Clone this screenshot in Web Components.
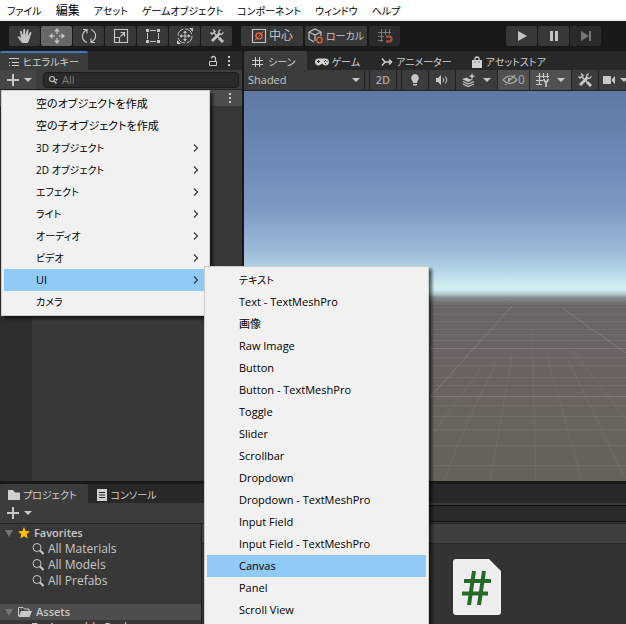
<!DOCTYPE html>
<html lang="ja">
<head>
<meta charset="utf-8">
<meta name="viewport" content="width=device-width">
<title>Unity Editor</title>
<style>
html, body { height: 100%; margin: 0; }
body { overflow: hidden; background: #191919; color: #c8c8c8; font: 12px/16px "Open Sans", "Noto Sans CJK JP", sans-serif; font-feature-settings: "palt"; }
</style>
</head>
<body>
<unity-editor></unity-editor>
<script>
const ICONS = {
  hand: [16, 16, '<path d="M5 15 1 9.500c-.6-1 .6-1.800 1.400-1L4.200 10 3 3.800c-.2-1.300 1.400-1.500 1.700-.3L6 7.500 6.300 1.800c0-1.300 1.800-1.300 1.800 0L8.500 7.300 9.700 2.200c.3-1.200 2-.9 1.800.4L10.900 8 12.700 4.600c.6-1 2-.4 1.600.8L12.500 11c-.5 2-1.200 3-2 4z" fill="currentColor"/>'],
  move: [18, 18, '<path d="M9 2v5M9 11v5M2 9h5M11 9h5" stroke="currentColor" stroke-width="1.200"/><path d="M6 4.500 9 1l3 3.500zM6 13.500 9 17l3-3.500zM4.500 6 1 9l3.500 3zM13.500 6 17 9l-3.500 3z" fill="currentColor"/>'],
  rotate: [16, 16, '<path d="M6 14.500C0 12 0 5 5.500 2M2 1.500h4v4M10 1.500C16 4 16 11 10.500 14M14 14.500h-4v-4" fill="none" stroke="currentColor" stroke-width="1.200"/>'],
  scale: [16, 16, '<path d="M1.500 1.500h13v13h-13zM1.500 9.500h5v5M7.500 8.500l4-4M7.500 4.500h4v4" fill="none" stroke="currentColor" stroke-width="1.200"/>'],
  rect: [16, 16, '<path d="M5 2.500h6M5 13.500h6M2.500 5v6M13.500 5v6" stroke="currentColor"/><path d="M1 1h3v3H1zM12 1h3v3h-3zM1 12h3v3H1zM12 12h3v3h-3z" fill="currentColor"/>'],
  transform: [18, 18, '<circle cx="9" cy="9" r="7" fill="none" stroke="currentColor" stroke-dasharray="9 2"/><path d="M9 4v10M4 9h10" stroke="currentColor"/><path d="M7 6l2-2.500L11 6zM7 12l2 2.500 2-2.500zM6 7 3.500 9 6 11zM12 7l2.500 2-2.500 2zM13 1h4v4zM5 17H1v-4z" fill="currentColor"/>'],
  tools: [16, 16, '<path d="M1.500 4.500 3 6l3-2.500L4 1.500" fill="none" stroke="currentColor" stroke-width="1.500"/><path d="m5 5 5 5" stroke="currentColor" stroke-width="1.500"/><path d="m10 10 4 4" stroke="currentColor" stroke-width="3"/><path d="M14.500 3.500 12 6 10 4l2.500-2.500C10 1 8.500 3 9 5l-7 7 2 2 7-7c2 .5 4-1 3.500-3.500z" fill="currentColor"/>'],
  center: [16, 16, '<path d="M1.500 1.500h13v13h-13z" fill="none" stroke="currentColor" stroke-width="1.200"/><path d="m3.500 12.500 9-9" stroke="#e2603c"/><circle cx="8" cy="8" r="3" fill="none" stroke="#e2603c" stroke-width="1.500"/>'],
  local: [16, 16, '<path d="m1 4 6-3 6 3v4M1 4v7l5 3M1 4l6 3 6-3M7 7v6" fill="none" stroke="currentColor" stroke-width="1.200"/><circle cx="11.500" cy="12" r="2.700" fill="none" stroke="#e2603c" stroke-width="1.400"/>'],
  snap: [16, 16, '<path d="M4.500 1v13M8.500 1v6M12.500 1v5M1 4.500h13M1 8.500h6M1 12.500h5" stroke="currentColor"/><path d="M9 8.500h3a2.500 2.500 0 0 1 0 5H9" fill="none" stroke="#9c5240" stroke-width="2.400"/>'],
  play: [14, 14, '<path d="m3 2 9 5-9 5z" fill="currentColor"/>'],
  pause: [14, 14, '<path d="M3 2h3v10H3zM8 2h3v10H8z" fill="currentColor"/>'],
  step: [14, 14, '<path d="m2 2 8 5-8 5zM10 2h2v10h-2z" fill="currentColor"/>'],
  hierarchy: [12, 10, '<path d="M1 1.500h10M4 5.500h7M4 8.500h7M1 5.500h1M1 8.500h1" stroke="currentColor"/>'],
  lock: [12, 12, '<path d="M2.500 6.500h7v4h-7z" fill="none" stroke="currentColor"/><path d="M8.500 6V3.500a2 2 0 0 0-4 0" fill="none" stroke="currentColor" stroke-width="1.300"/>'],
  kebab: [4, 12, '<path d="M1 1h2v2H1zM1 5h2v2H1zM1 9h2v2H1z" fill="currentColor"/>'],
  plus: [12, 12, '<path d="M6 0v12M0 6h12" stroke="currentColor" stroke-width="2"/>'],
  down: [8, 6, '<path d="M0 1h8L4 5z" fill="currentColor"/>'],
  search: [10, 10, '<circle cx="4" cy="4" r="2.500" fill="none" stroke="currentColor" stroke-width="1.200"/><path d="m6 6 2.500 2.500" stroke="currentColor" stroke-width="1.500"/><path d="M7 4h3L8.500 6z" fill="currentColor"/>'],
  lens: [12, 12, '<circle cx="5" cy="4.500" r="4" fill="none" stroke="currentColor"/><path d="m8 7.500 3.500 3.500" stroke="currentColor" stroke-width="2"/>'],
  grid: [13, 10, '<path d="M3.500 0v10M7.500 0v10M0 3.500h11M0 7.500h11" stroke="currentColor"/>'],
  gamepad: [14, 10, '<path d="M3.500 1.500h7a3.300 3.300 0 0 1 0 7C8.500 8.500 8.500 7 7 7S5.500 8.500 3.500 8.500a3.300 3.300 0 0 1 0-7z" fill="currentColor"/><path d="M2 4.500h3M3.500 3v3" stroke="#282828"/><path d="M9 4.500h1M11.500 4.500h1M10.500 3v1M10.500 6v1" stroke="#282828"/>'],
  animator: [12, 10, '<path d="M1 1.500 4 5h6M1 8.500 4 5M8 2.500 10.500 5 8 7.500" fill="none" stroke="currentColor" stroke-width="1.500"/>'],
  bag: [12, 12, '<path d="M1 4h10v8H1z" fill="currentColor"/><path d="M4 5V2.500Q4 1 6 1t2 1.500V5" fill="none" stroke="currentColor" stroke-width="1.300"/><path d="M3.500 6h1M7.500 6h1" stroke="#282828"/>'],
  bulb: [10, 14, '<path d="M5 1a4 4 0 0 1 2.500 7L7 10H3L2.500 8A4 4 0 0 1 5 1zM3 11h4v1.500H3z" fill="currentColor"/>'],
  audio: [14, 12, '<path d="M1 4h2l3-3v10L3 8H1z" fill="currentColor"/><path d="M8 4q1.500 2 0 4M10.500 2.500q2.500 3.500 0 7" fill="none" stroke="currentColor"/>'],
  effects: [14, 14, '<path d="M1 8.500l5 2.500 6-2.500M1 11l5 2.500 6-2.500" fill="none" stroke="currentColor" stroke-width="1.300"/><path d="m0 6 5-1.500 2 1.500 4 .5-5 2.500zM10 0l1 2.500L13.500 3 11 4l-1 2.500L9 4 6.500 3 9 2.500z" fill="currentColor"/>'],
  hidden: [16, 12, '<path d="M1 6q7-8 14 0-7 7-14 0zM3 11 13 1" fill="none" stroke="currentColor" stroke-width="1.200"/><path d="M6 4h3L6 8z" fill="currentColor"/>'],
  gridY: [14, 14, '<path d="M3.500 0v12M7.500 0v5M11.500 0v5M0 3.500h13M0 7.500h7M0 11.500h6" stroke="currentColor" stroke-width="1.200"/><path d="m7.500 6 2.500 4 2.500-4M10 10v4" fill="none" stroke="currentColor" stroke-width="1.700"/>'],
  camera: [14, 10, '<path d="M1 1h8v8H1zM10 4l3-3v8l-3-3z" fill="currentColor"/>'],
  folder: [12, 10, '<path d="M0 0h5l2 2.500h5V10H0z" fill="currentColor"/>'],
  openFolder: [14, 10, '<path d="M.5 9V.5H5l1.500 1.500H11V4" fill="none" stroke="currentColor"/><path d="M3 4h11l-2.500 6H.5z" fill="currentColor"/>'],
  console: [12, 12, '<path d="M1 0h10v12H1z" fill="currentColor"/><path d="M3 3.500h6M3 6h6M3 8.500h6" stroke="#282828"/>'],
  star: [12, 12, '<path d="m6 0 1.700 4 4.300.4-3.300 2.800 1 4.300L6 9.200l-3.700 2.300 1-4.300L0 4.400 4.300 4z" fill="#ffc107"/>'],
  fold: [10, 8, '<path d="M1 1h8L5 8z" fill="#747474"/>'],
  chevron: [6, 10, '<path d="m1 1.500 3.500 3.500L1 8.500" fill="none" stroke="#333" stroke-width="1.100"/>'],
  script: [48, 56, '<path d="M3 0h33l12 12v41a3 3 0 0 1-3 3H3a3 3 0 0 1-3-3V3a3 3 0 0 1 3-3z" fill="#eee"/><path d="m21 12-5 34M31 12l-5 34M11 22h27M9 34.500h26" stroke="#256b28" stroke-width="4"/>']
};
const define = (tag, css, html) => customElements.define(tag, class extends HTMLElement {
  connectedCallback() {
    if (this.shadowRoot) return;
    const t = document.createElement('template');
    t.innerHTML = `<style>*{box-sizing:border-box}button,input,select{font:inherit;font-feature-settings:inherit;color:inherit;border:0;margin:0;padding:0;background:none}${css}</style>` + (typeof html === 'function' ? html(this) : html);
    this.attachShadow({ mode: 'open' }).append(t.content.cloneNode(true));
  }
});
const icon = n => `<ui-icon name="${n}"></ui-icon>`;

define('ui-icon', ':host{display:inline-flex;flex:none}svg{display:block}', el => {
  const [w, h, d] = ICONS[el.getAttribute('name')];
  return `<svg width="${w}" height="${h}" viewBox="0 0 ${w} ${h}" aria-hidden="true">${d}</svg>`;
});

define('menu-bar', `:host{display:block;flex:none;background:#fff;color:#000;border-bottom:2px solid #f0f0f0}
nav{display:flex;height:19px;padding:2px 0 0 7px;gap:14px;font-size:10px}button{white-space:nowrap}.kanji{font-size:12px}`,
  `<nav aria-label="メイン">${['ファイル', '編集', 'アセット', 'ゲームオブジェクト', 'コンポーネント', 'ウィンドウ', 'ヘルプ'].map(t => `<button${t === '編集' ? ' class="kanji"' : ''}>${t}</button>`).join('')}</nav>`);

define('tool-button', `:host{display:block;flex:none}
button{display:flex;align-items:center;justify-content:center;gap:2px;width:31px;height:20px;background:#383838;color:#c4c4c4;white-space:nowrap;border-radius:2px}
:host([wide]) button{width:62px}:host([kana]) button{font-size:10px}:host([active]) button{background:#676767}:host([dim]) button{background:#2a2a2a;color:#777}`,
  el => `<button aria-label="${el.getAttribute('label')}">${icon(el.getAttribute('icon'))}<slot></slot></button>`);

define('main-toolbar', `:host{display:flex;flex:none;height:30px;align-items:center;padding:0 25px 0 9px;background:#191919;gap:9px}
div{display:flex;gap:1px}.pivot{gap:2px}.play{margin-left:auto}.snap{margin-left:-7px}`,
  `<div>${['hand', 'move', 'rotate', 'scale', 'rect', 'transform', 'tools'].map(n => `<tool-button icon="${n}" label="${n}"${n === 'move' ? ' active' : ''}></tool-button>`).join('')}</div>
<div class="pivot"><tool-button wide icon="center" label="中心">中心</tool-button><tool-button wide kana icon="local" label="ローカル">ローカル</tool-button></div>
<div class="snap"><tool-button dim icon="snap" label="snap"></tool-button></div>
<div class="play"><tool-button icon="play" label="play"></tool-button><tool-button icon="pause" label="pause"></tool-button><tool-button dim icon="step" label="step"></tool-button></div>`);

define('tab-strip', `:host{display:flex;height:19px;flex:none;background:#282828}`, '<slot></slot>');
define('tab-item', `:host{display:block;flex:none}
button{display:flex;align-items:center;gap:3px;height:19px;padding:2px 11px 0 8px;white-space:nowrap;color:#d0d0d0;font-size:10px}
:host([active]) button{background:#3c3c3c;border-radius:2px 2px 0 0}
:host([focused]) button{border-top:2px solid #3a79bb;padding:0 9px 0 8px}`,
  el => `<button role="tab" aria-selected="${el.hasAttribute('active')}">${icon(el.getAttribute('icon'))}<slot></slot></button>`);

define('hierarchy-panel', `:host{display:flex;flex-direction:column;background:#383838;min-width:0}
.end{display:flex;align-items:center;gap:8px;margin-left:auto;padding-right:11px}
.bar{display:flex;height:20px;align-items:center;background:#3c3c3c;gap:7px;padding-right:3px;border-bottom:1px solid #232323}
.add{display:flex;align-items:center;gap:5px;width:36px;height:19px;padding-left:7px;background:#464646}
label{display:flex;align-items:center;gap:4px;flex:1;height:16px;padding-left:4px;background:#2a2a2a;border:1px solid #191919;border-radius:4px}
input{width:100%;min-width:0;outline:0;font-size:11px}input::placeholder{color:#7b7b7b;opacity:1}
.row{display:flex;align-items:center;justify-content:flex-end;height:16px;padding-right:10px;background:#4d4d4d}
.tree{flex:1;background:linear-gradient(90deg,#2d2d2d 32px,#383838 32px)}`,
  `<tab-strip><tab-item active focused icon="hierarchy">ヒエラルキー</tab-item><span class="end">${icon('lock')}${icon('kebab')}</span></tab-strip>
<div class="bar"><button class="add" aria-label="作成">${icon('plus')}${icon('down')}</button><label>${icon('search')}<input aria-label="検索" placeholder="All"></label></div>
<div class="row">${icon('kebab')}</div><div class="tree"></div>`);

define('scene-panel', `:host{display:flex;flex-direction:column;min-width:0;overflow:hidden}
.gap{width:2px}
.bar{display:flex;flex:none;height:21px;gap:1px;background:#232323;border-bottom:1px solid #232323}
.bar button,.shade{display:flex;flex:none;align-items:center;justify-content:center;gap:4px;width:26px;background:#3c3c3c}
.shade{position:relative;width:120px;justify-content:flex-end;padding-right:4px;font-size:11px}
.shade select{position:absolute;inset:0;appearance:none;padding-left:4px;width:100%}
.bar .pair{width:41px;gap:7px}.bar .on{background:#505050}.bar .eye{width:31px;gap:0;color:#aaa}.bar .text{color:#aaa;font-weight:600;font-size:11px}
.bar .camera{justify-content:flex-start;gap:4px;padding-left:3px}
.pad{flex:none;width:4px;background:#3c3c3c}
.view{flex:1;min-height:0;background:linear-gradient(#5f78a4 0,#708bb7 20%,#7d9ac4 30%,#9cbbd9 41%,#b3d6e7 46%,#d0edf2 50%,#d0edf2 51%,#b5cacf 52%,#858b8d 53%,#6a6564 55%,#6b625f 76%,#69645c 84%,#66635b 100%)}
svg{display:block;width:100%;height:100%}`,
  `<tab-strip><tab-item active icon="grid">シーン</tab-item><tab-item icon="gamepad">ゲーム</tab-item><span class="gap"></span><tab-item icon="animator">アニメーター</tab-item><tab-item icon="bag">アセットストア</tab-item></tab-strip>
<div class="bar"><span class="shade"><select aria-label="描画モード"><option>Shaded</option></select>${icon('down')}</span><span class="pad"></span><button class="text">2D</button><span class="pad"></span><button aria-label="ライト">${icon('bulb')}</button><button aria-label="音声">${icon('audio')}</button><button class="pair" aria-label="効果">${icon('effects')}${icon('down')}</button><button class="on eye">${icon('hidden')}0</button><button class="on pair" aria-label="グリッド">${icon('gridY')}${icon('down')}</button><button aria-label="ツール">${icon('tools')}</button><button class="camera pair" aria-label="カメラ">${icon('camera')}${icon('down')}</button></div>
<div class="view"><svg viewBox="0 0 382 390" preserveAspectRatio="none" aria-hidden="true"><g fill="none" stroke="#aaa" stroke-opacity=".12">
<path d="M0 216.500h382M0 223.500h382M0 230.500h382M0 238.500h382M0 243.500h382M0 249.500h382M0 266.500h382M0 274.500h382M0 286.500h382M0 294.500h382M0 314.500h382M0 325.500h382M0 338.500h382M0 354.500h382M0 374.500h382"/>
<path d="M200 390Q220 335 253 270M246 390l22-125M292 390l-4-150M338 390l-35-125M381 387l-58-120M187 345l52-70M382 328l-55-70"/>
<path stroke-opacity=".3" d="M0 257.500h382M0 305.500h382M187 305l81-90M318 217l64 45"/></g></svg></div>`);

define('project-panel', `:host{display:flex;flex-direction:column;background:#383838;min-width:0;overflow:hidden}
.bar{display:flex;flex:none;height:20px;align-items:center;gap:5px;padding-left:7px;background:#3c3c3c}
.bar button{display:flex;align-items:center;gap:5px}
.bar input{flex:1;min-width:0;margin-left:200px;height:17px;background:#2a2a2a;border:1px solid #111;border-right:0;outline:0}
.body{display:flex;flex:1;min-height:0;border-top:1px solid #232323}
.list{flex:none;width:202px;border-right:1px solid #202020;padding-top:1px;overflow:hidden}
.row{display:flex;width:100%;height:16px;align-items:center;gap:4px;padding-left:4px;white-space:nowrap}
.row.child{padding-left:32px}.row b{font-weight:600;font-size:11px}.assets{background:#4d4d4d}
.space{height:15px}.files{flex:1;background:#333}.path{height:20px;background:#404040;border-bottom:1px solid #282828}
.grid{display:flex;padding:15px 0 0 251px}.grid button{display:flex}`,
  `<tab-strip><tab-item active icon="folder">プロジェクト</tab-item><tab-item icon="console">コンソール</tab-item></tab-strip>
<div class="bar"><button aria-label="作成">${icon('plus')}${icon('down')}</button><input aria-label="検索"></div>
<div class="body"><div class="list"><button class="row">${icon('fold')}${icon('star')}<b>Favorites</b></button>
${['Materials', 'Models', 'Prefabs'].map(t => `<button class="row child">${icon('lens')}<span>All ${t}</span></button>`).join('')}
<div class="space"></div><button class="row assets">${icon('fold')}${icon('openFolder')}<b>Assets</b></button><button class="row child">${icon('folder')}<span>Assembly Packs</span></button></div>
<div class="files"><div class="path"></div><div class="grid"><button aria-label="C# スクリプト">${icon('script')}</button></div></div></div>`);

define('popup-item', `:host{display:block}button{display:flex;align-items:center;justify-content:space-between;width:100%;height:22px;padding:0 8px 0 32px;text-align:left;white-space:nowrap;color:#000;font-size:11px}
:host([kana]) button{font-size:10px}:host([active]) button{background:#91c9f7}`,
  el => `<button role="menuitem"><span><slot></slot></span>${el.hasAttribute('more') ? icon('chevron') : ''}</button>`);
define('popup-menu', `:host{display:block;padding:2px;border:1px solid #ccc;background:#f1f1f1;box-shadow:3px 3px 3px #0009}`, '<div role="menu"><slot></slot></div>');

define('unity-editor', `:host{display:flex;flex-direction:column;height:100vh;position:relative}
.work{display:flex;flex:1;min-height:0;gap:2px}hierarchy-panel{flex:0 0 242px}scene-panel{flex:1}
project-panel{flex:0 0 140px;margin-top:3px}
popup-menu{position:absolute}.create{left:1px;top:90px;width:209px}.ui{left:204px;top:266px;width:225px;bottom:-8px}`,
  `<menu-bar></menu-bar><main-toolbar></main-toolbar><div class="work"><hierarchy-panel></hierarchy-panel><scene-panel></scene-panel></div><project-panel></project-panel>
<popup-menu class="create">${[['空のオブジェクトを作成'], ['空の子オブジェクトを作成'], ['3D オブジェクト', 'more kana'], ['2D オブジェクト', 'more kana'], ['エフェクト', 'more kana'], ['ライト', 'more kana'], ['オーディオ', 'more kana'], ['ビデオ', 'more kana'], ['UI', 'more active'], ['カメラ', 'kana']].map(([t, a = '']) => `<popup-item ${a}>${t}</popup-item>`).join('')}</popup-menu>
<popup-menu class="ui">${['テキスト', 'Text - TextMeshPro', '画像', 'Raw Image', 'Button', 'Button - TextMeshPro', 'Toggle', 'Slider', 'Scrollbar', 'Dropdown', 'Dropdown - TextMeshPro', 'Input Field', 'Input Field - TextMeshPro', 'Canvas', 'Panel', 'Scroll View'].map(t => `<popup-item${t === 'Canvas' ? ' active' : t === 'テキスト' ? ' kana' : ''}>${t}</popup-item>`).join('')}</popup-menu>`);
</script>
</body>
</html>
